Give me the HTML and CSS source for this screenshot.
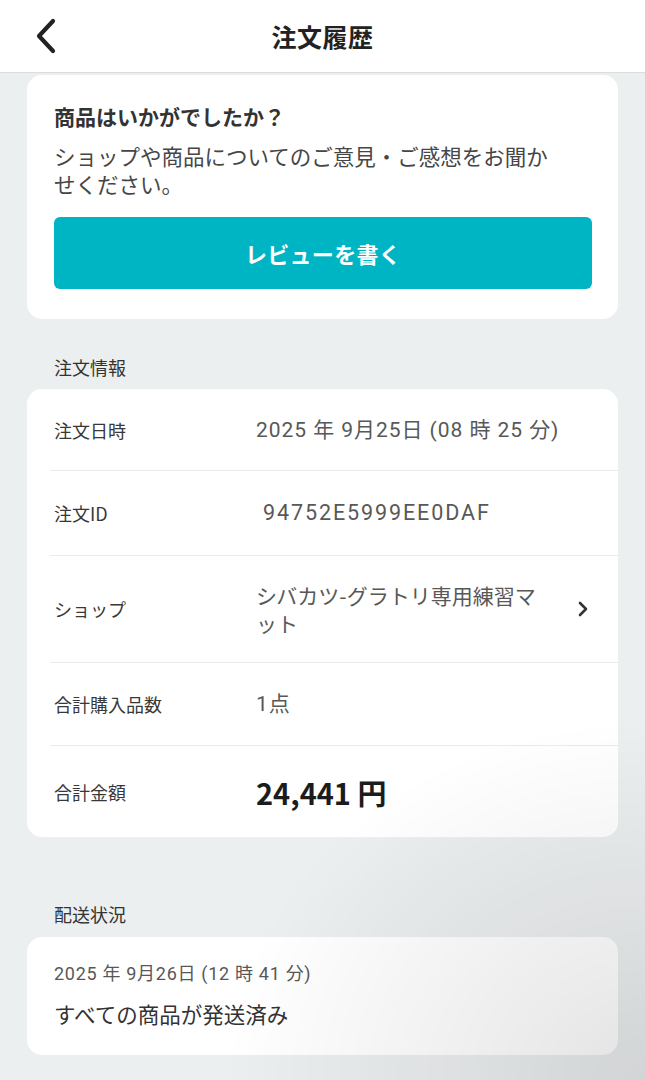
FILE: index.html
```html
<!DOCTYPE html>
<html lang="ja">
<head>
<meta charset="utf-8">
<title>注文履歴</title>
<link rel="stylesheet" href="styles.css">
</head>
<body>
<header class="topbar">
  <button class="back" aria-label="戻る">
    <svg width="24" height="36" viewBox="0 0 24 36"><path d="M19 3 L5 18 L19 33" fill="none" stroke="#222" stroke-width="4.2" stroke-linecap="round" stroke-linejoin="round"/></svg>
  </button>
  <h1 class="title">注文履歴</h1>
  <span></span>
</header>

<main class="content">
  <section class="card review">
    <h2 class="review-title">商品はいかがでしたか？</h2>
    <p class="review-text">ショップや商品についてのご意見・ご感想をお聞かせください。</p>
    <button class="review-btn">レビューを書く</button>
  </section>

  <h3 class="section-label">注文情報</h3>
  <section class="card info">
    <div class="row">
      <span class="label">注文日時</span>
      <span class="value num">2025 年 9月25日 (08 時 25 分)</span>
    </div>
    <div class="row row-id">
      <span class="label">注文ID</span>
      <span class="value num id">94752E5999EE0DAF</span>
    </div>
    <div class="row row-shop">
      <span class="label">ショップ</span>
      <span class="value shop">シバカツ-グラトリ専用練習マット</span>
      <svg class="chev" width="12" height="16" viewBox="0 0 12 16"><path d="M3 2 L9 8 L3 14" fill="none" stroke="#333" stroke-width="2.6" stroke-linecap="round" stroke-linejoin="round"/></svg>
    </div>
    <div class="row row-count">
      <span class="label">合計購入品数</span>
      <span class="value num">1点</span>
    </div>
    <div class="row row-total">
      <span class="label">合計金額</span>
      <span class="value total">24,441 円</span>
    </div>
  </section>

  <h3 class="section-label ship-label">配送状況</h3>
  <section class="card ship">
    <p class="ship-date">2025 年 9月26日 (12 時 41 分)</p>
    <p class="ship-status">すべての商品が発送済み</p>
  </section>
</main>
<div class="glare"></div>
</body>
</html>
```

FILE: styles.css
```css
* { box-sizing: border-box; }

html, body {
  margin: 0;
  padding: 0;
}

body {
  background: #eceff0;
  font-family: "Noto Sans CJK JP", "Noto Sans", sans-serif;
  color: #333;
  min-height: 1080px;
}

.topbar {
  position: relative;
  z-index: 2;
  height: 73px;
  background: #fff;
  border-bottom: 1px solid #dadcdd;
  display: grid;
  grid-template-columns: 1fr auto 1fr;
  align-items: center;
}

.back {
  justify-self: start;
  margin-left: 34px;
  padding: 0;
  border: 0;
  background: none;
  display: flex;
  align-items: center;
  height: 36px;
}

.title {
  margin: 0;
  font-size: 25px;
  font-weight: 700;
  color: #222;
  letter-spacing: 0.5px;
}

.content {
  padding: 0 27px;
}

.card {
  background: #fff;
  border-radius: 15px;
}

.review {
  margin-top: 2px;
  padding: 27px 26px 30px 27px;
}

.review-title {
  margin: 0;
  font-size: 21px;
  line-height: 28px;
  font-weight: 700;
  color: #333;
}

.review-text {
  margin: 12px 0 0;
  font-size: 21.5px;
  line-height: 27.5px;
  color: #464646;
  max-width: 510px;
}

.review-btn {
  display: block;
  width: 100%;
  height: 72px;
  margin-top: 20px;
  border: 0;
  border-radius: 6px;
  background: #00b5c3;
  color: #fff;
  font-family: inherit;
  font-size: 22px;
  font-weight: 700;
  letter-spacing: 0.3px;
}

.section-label {
  margin: 36px 0 10px 27px;
  font-size: 18px;
  line-height: 24px;
  font-weight: 400;
  color: #333;
}

.ship-label {
  margin-top: 65px;
  margin-bottom: 11px;
}

.row {
  display: grid;
  grid-template-columns: 202px 1fr 26px;
  align-items: center;
  min-height: 82px;
  padding: 25px 28px 25px 4px;
  margin-left: 23px;
  border-bottom: 1px solid #ebebeb;
}

.row:last-child {
  border-bottom: 0;
}

.row-id { min-height: 85px; }
.row-count { min-height: 83px; }
.row-total { min-height: 91px; }

.label {
  font-size: 18px;
  line-height: 24px;
  color: #383838;
}

.value {
  font-size: 21px;
  line-height: 28px;
  color: #585858;
}

.value.num {
  font-family: Roboto, "Noto Sans CJK JP", sans-serif;
  letter-spacing: 0.95px;
}

.value.id {
  padding-left: 7px;
  font-size: 21.5px;
  letter-spacing: 1.9px;
}

.value.shop {
  padding-right: 12px;
}

.value.total {
  font-size: 29px;
  line-height: 40px;
  font-weight: 700;
  color: #1c1c1c;
}

.chev {
  justify-self: end;
  margin-right: 1px;
}

.ship {
  padding: 24px 27px 26px;
}

.ship-date {
  margin: 0;
  font-family: Roboto, "Noto Sans CJK JP", sans-serif;
  font-size: 18px;
  line-height: 26px;
  letter-spacing: 0.7px;
  color: #585858;
}

.ship-status {
  margin: 12px 0 0;
  font-size: 21.5px;
  line-height: 30px;
  color: #333;
}

.glare {
  position: fixed;
  inset: 0;
  pointer-events: none;
  z-index: 3;
  background: radial-gradient(ellipse 420px 360px at 100% 100%, rgba(0,0,0,0.11), rgba(0,0,0,0) 100%);
}
```
